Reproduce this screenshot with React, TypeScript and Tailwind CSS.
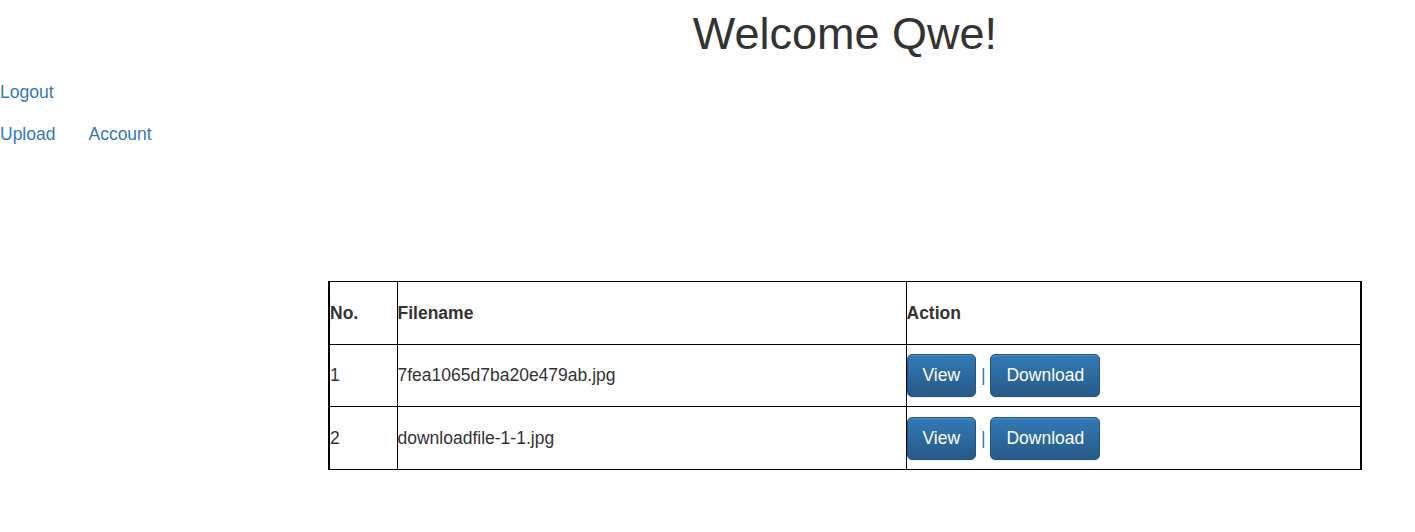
const files = [
  { no: 1, name: "7fea1065d7ba20e479ab.jpg" },
  { no: 2, name: "downloadfile-1-1.jpg" },
]

function ActionButton({ label }: { label: string }) {
  return (
    <button className="h-[43px] rounded-[5px] border border-[#245580] bg-gradient-to-b from-[#337ab7] to-[#265a88] px-[15px] text-[17.5px] leading-[25px] text-white shadow-[inset_0_1px_0_rgba(255,255,255,0.15),0_1px_1px_rgba(0,0,0,0.075)]">
      {label}
    </button>
  )
}

export default function App() {
  return (
    <div className="min-h-[532px] bg-white font-['Liberation_Sans',Arial,sans-serif] text-[17.5px] leading-[25px] text-[#333]">
      {/* Heading centred over the table area */}
      <div className="pt-[9px] pl-[328px] pr-[53px]">
        <h1 className="text-center text-[45px] leading-[50px] font-normal">Welcome Qwe!</h1>
      </div>

      {/* Nav links */}
      <div className="mt-[21px]">
        <a href="#" className="text-[#337ab7]">Logout</a>
      </div>
      <div className="mt-[17px] flex gap-[33px]">
        <a href="#" className="text-[#337ab7]">Upload</a>
        <a href="#" className="text-[#337ab7]">Account</a>
      </div>

      {/* File table */}
      <div className="mt-[134px] pl-[328px]">
        <table className="w-[1034px] border-collapse border-x-2 border-y border-black">
          <thead>
            <tr className="h-[63px]">
              <th className="w-[68px] border border-black p-0 text-left align-middle font-bold">No.</th>
              <th className="w-[509px] border border-black p-0 text-left align-middle font-bold">Filename</th>
              <th className="border border-black p-0 text-left align-middle font-bold">Action</th>
            </tr>
          </thead>
          <tbody>
            {files.map((f, i) => (
              <tr key={f.no} className={i === 0 ? "h-[62px]" : "h-[63px]"}>
                <td className="border border-black p-0 align-middle">{f.no}</td>
                <td className="border border-black p-0 align-middle">{f.name}</td>
                <td className="border border-black p-0 align-middle">
                  <ActionButton label="View" />
                  <span className="text-[#337ab7]"> | </span>
                  <ActionButton label="Download" />
                </td>
              </tr>
            ))}
          </tbody>
        </table>
      </div>
    </div>
  )
}
